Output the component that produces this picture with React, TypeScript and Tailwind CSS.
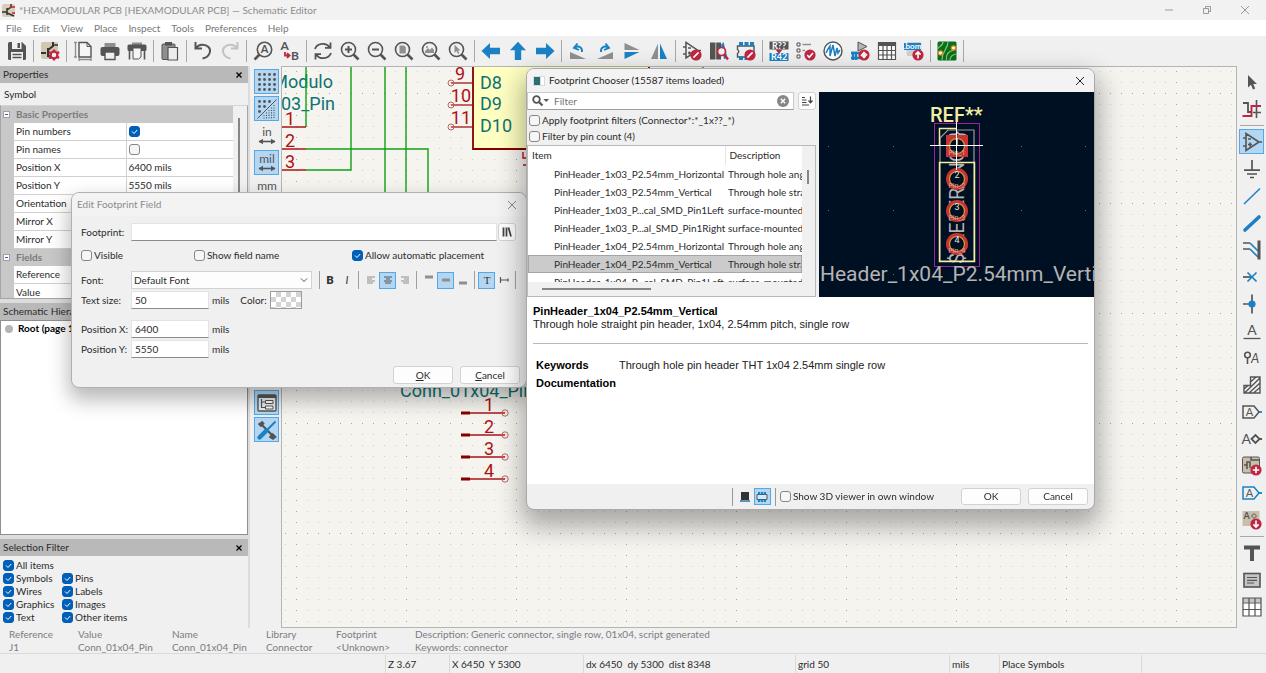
import * as React from "react";
import clsx from "clsx";

const G = "#545454";
const L = "#8f8f8f";
const B = "#1a81c4";
const R = "#bf2641";

function Badge({ x = 14, y = 14, d }: { x?: number; y?: number; d: string }) {
  return (
    <g transform={`translate(${x} ${y})`}>
      <circle r="5.6" fill={R} />
      <path d={d} stroke="#fff" strokeWidth="1.6" fill="none" />
    </g>
  );
}

function Lens({ children }: { children?: React.ReactNode }) {
  return (
    <g>
      <circle cx="8.5" cy="8.5" r="7" stroke={G} strokeWidth="1.6" fill="none" />
      <path d="M13.5 13.5L18.5 18.5" stroke={G} strokeWidth="2.6" />
      {children}
    </g>
  );
}

const SLASH = "M-2.6 2.6L2.6 -2.6";
const CHECK = "M-2.8 0L-0.8 2.2L3 -2";
const UP = "M0 3.6V-3M-2.6 -0.4L0 -3L2.6 -0.4";
const DOWN = "M0 -3.6V3M-2.6 0.4L0 3L2.6 0.4";
const PLUS = "M-3.2 0H3.2M0 -3.2V3.2";

const icons: Record<string, React.ReactNode> = {
  save: (
    <g>
      <path d="M1 2.5Q1 1 2.5 1H15L19 5V17.5Q19 19 17.5 19H2.5Q1 19 1 17.5Z" fill={G} />
      <path d="M5 1H14.5V8H5Z" fill="#f0f0f0" />
      <path d="M10.5 2H13V7H10.5Z" fill={G} />
      <path d="M4 11H16V19H4Z" fill="#f0f0f0" />
      <path d="M5.5 13.5H14.5M5.5 16.5H14.5" stroke={G} strokeWidth="1.4" />
    </g>
  ),
  setup: (
    <g>
      <rect x="1" y="1" width="17" height="17" rx="2" fill="#d1c6b0" />
      <path d="M1 12H6M8 7V16M8 9L13 5V1M8 14L11 17" stroke="#333" strokeWidth="2" fill="none" />
      <path d="M13 4H18" stroke="#333" strokeWidth="1.5" />
      <circle cx="14" cy="14" r="3.4" stroke={R} strokeWidth="2.2" fill="#f0f0f0" />
      <path d="M14 8.4V10M14 18V19.6M8.9 11L10.4 12M17.6 16L19.1 17M8.9 17L10.4 16M17.6 12L19.1 11" stroke={R} strokeWidth="2.2" />
    </g>
  ),
  page: (
    <g>
      <path d="M6 1.5H14L18 5.5V16H6Z" fill="#f6f6f6" stroke={G} strokeWidth="1.4" />
      <path d="M14 1.5V5.5H18" fill="none" stroke={G} />
      <path d="M2.5 1V16M1 1.5H4M1 16H4M6 18.5H18M6.2 17V20M18 17V20" stroke={L} strokeWidth="1.3" />
    </g>
  ),
  print: (
    <g>
      <path d="M4.5 2H15.5V6H4.5Z" fill={L} />
      <rect x="0.5" y="6" width="19" height="9" rx="2" fill={G} />
      <path d="M5 11H15V18.5H5Z" fill="#f0f0f0" stroke={G} strokeWidth="1.4" />
    </g>
  ),
  plot: (
    <g>
      <path d="M5 1.5H15V4H5Z" fill={L} />
      <rect x="0.5" y="3.5" width="19" height="6.5" rx="1.5" fill={G} />
      <path d="M2.5 9V18.5M17.5 9V18.5" stroke={G} strokeWidth="1.6" />
      <path d="M6 7H14V16L11.5 18H6Z" fill="#f5f5f5" stroke={G} strokeWidth="1" />
    </g>
  ),
  paste: (
    <g>
      <rect x="2" y="3" width="13" height="15.5" rx="1" fill={L} stroke={G} />
      <rect x="5" y="1" width="7" height="3.6" fill={G} />
      <path d="M8 6.5H17.5V19H8Z" fill="#ececec" stroke={G} strokeWidth="1.2" />
    </g>
  ),
  undo: <path d="M2.5 1V7.5H9M3 7C6 3 12 2.5 15.5 6C19 10 16 16.5 9.5 17.5" stroke={G} strokeWidth="2" fill="none" />,
  redo: <path d="M17.5 1V7.5H11M17 7C14 3 8 2.5 4.5 6C1 10 4 16.5 10.5 17.5" stroke="#c2c2c2" strokeWidth="2" fill="none" />,
  find: (
    <g>
      <circle cx="11.5" cy="8.5" r="7.2" stroke={G} strokeWidth="1.6" fill="none" />
      <path d="M6.5 13.5L1.5 18.5" stroke={G} strokeWidth="2.6" />
      <text x="11.5" y="12.4" textAnchor="middle" fontSize="11" fontWeight="700" fill={G}>A</text>
    </g>
  ),
  replace: (
    <g fontWeight="700" fontSize="12" fill={G}>
      <text x="0.5" y="9">A</text>
      <text x="11" y="19">B</text>
      <path d="M5 11V14.5H9M7 12.2L9.6 14.5L7 16.8" stroke={R} strokeWidth="1.8" fill="none" />
    </g>
  ),
  refresh: (
    <path d="M2 8C4 2 13 1 16.5 6M17.5 1.5V6.8H12M18 12C16 18 7 19 3.5 14M2.5 18.5V13.2H8" stroke={G} strokeWidth="1.8" fill="none" />
  ),
  zoomIn: <Lens><path d="M5 8.5H12M8.5 5V12" stroke={G} strokeWidth="2" /></Lens>,
  zoomOut: <Lens><path d="M5 8.5H12" stroke={G} strokeWidth="2" /></Lens>,
  zoomFit: <Lens><path d="M5.5 4.5H10L11.8 6.3V12.5H5.5Z" fill={L} /></Lens>,
  zoomObj: <Lens><path d="M4 12V10L7 7L9 9L11 6.5L13 9V12Z" fill={L} /><circle cx="6" cy="6" r="1" fill={L} /></Lens>,
  zoomSel: <Lens><path d="M6.5 3.5V12L8.5 10L10 13L11.3 12.3L10 9.5H12.5Z" fill={L} /></Lens>,
  left: <path d="M0.5 10L9 2V6.8H19V13.2H9V18Z" fill={B} />,
  up: <path d="M10 0.8L18 9.2H13.2V19H6.8V9.2H2Z" fill={B} />,
  right: <path d="M19.5 10L11 2V6.8H1V13.2H11V18Z" fill={B} />,
  rotL: (
    <g>
      <path d="M2 11V18H18Z" fill={L} />
      <path d="M7 6.5C11 4 14.5 7 14 11M9.5 2.5L6 6.8L11 9" stroke={B} strokeWidth="1.9" fill="none" />
    </g>
  ),
  rotR: (
    <g>
      <path d="M18 11V18H2Z" fill={L} />
      <path d="M13 6.5C9 4 5.5 7 6 11M10.5 2.5L14 6.8L9 9" stroke={B} strokeWidth="1.9" fill="none" />
    </g>
  ),
  mirV: (
    <g>
      <path d="M2.5 2V9H17.5Z" fill={L} />
      <path d="M2.5 18V11H17.5Z" fill={B} />
    </g>
  ),
  mirH: (
    <g>
      <path d="M2 18H9V2.5Z" fill={L} />
      <path d="M18 18H11V2.5Z" fill={B} />
    </g>
  ),
  symEdit: (
    <g>
      <path d="M4 1.5V17L16 9.5Z M1 6H4M1 13H4M16 9.5H19M6 7H9M6 12H9M7.5 10.5V13.5" stroke={G} strokeWidth="1.5" fill="none" />
      <Badge d={SLASH} />
    </g>
  ),
  browse: (
    <g>
      <path d="M1 1.5H6.5V18.5H1Z M7.2 1.5H12V18.5H7.2Z" fill={G} />
      <path d="M12 4L14.5 1L18.5 17L15 18Z" fill={B} />
      <circle cx="12.5" cy="10.5" r="4" stroke={R} strokeWidth="1.7" fill="#f0f0f0" />
      <path d="M15.3 13.6L19 18.5" stroke={R} strokeWidth="2.4" />
    </g>
  ),
  fpEdit: (
    <g>
      <path d="M1.5 5H18V16H1.5V12.5Q4 10.5 1.5 8.5Z" stroke={G} strokeWidth="1.4" fill="none" />
      <path d="M3 1H7V5H3Z M8.5 1H12.5V5H8.5Z M14 1H18V5H14Z M3 15.5H7V19H3Z M8.5 15.5H12.5V19H8.5Z" fill={B} />
      <Badge d={SLASH} />
    </g>
  ),
  annotate: (
    <g fontWeight="700" fontSize="9" fill="#fff" textAnchor="middle">
      <rect x="0.5" y="0.5" width="19" height="8" fill={G} />
      <text x="10" y="7.6">R??</text>
      <rect x="0.5" y="12" width="19" height="8" fill={B} />
      <text x="10" y="19.2">R42</text>
      <path d="M6.5 8.5H13.5L10 13Z" fill={R} />
    </g>
  ),
  erc: (
    <g>
      <path d="M1 2H4V5H1Z M1 8H4V11H1Z M1 14H4V17H1Z" fill="none" stroke={G} />
      <path d="M6.5 3.5H15M6.5 9.5H9" stroke={L} strokeWidth="1.4" />
      <Badge d={CHECK} />
    </g>
  ),
  sim: (
    <g>
      <circle cx="10" cy="10" r="9" fill="#fff" stroke={G} strokeWidth="1.4" />
      <path d="M3 12L5 8L7 5V15L10 4L12 15L14 7L15 12L17 9" stroke={B} strokeWidth="1.5" fill="none" />
    </g>
  ),
  assign: (
    <g>
      <path d="M8 1V10L17 5.5Z" fill="#b5b5b5" stroke={G} />
      <path d="M1 12H9M1 17H10M3 10.5V19M6 10.5V19" stroke={B} strokeWidth="2.4" />
      <Badge d="M-3 1L0 -2.5L1.5 -1M3 -1L0 2.5L-1.5 1M-1 1L1 -1" />
    </g>
  ),
  table: (
    <g>
      <rect x="1.2" y="1.2" width="17.6" height="17.6" fill="#fff" />
      <path d="M1 1H19V5H1Z" fill={G} />
      <path d="M1.5 1V18.5H18.5V1M1 9.5H19M1 14H19M6 5V19M10 5V19M14.5 5V19" stroke={G} strokeWidth="1.2" fill="none" />
    </g>
  ),
  bom: (
    <g>
      <rect x="2.5" y="1" width="15" height="14" rx="2" fill="#cfcfcf" />
      <rect x="0" y="2" width="17" height="7" fill={B} />
      <text x="8.5" y="8" fontSize="8" fontWeight="700" fill="#fff" textAnchor="middle">.bom</text>
      <Badge d={UP} />
    </g>
  ),
  pcb: (
    <g>
      <rect x="0.5" y="0.5" width="19" height="19" rx="1.5" fill="#0d6f19" />
      <path d="M6 0.5C6 6 1 5 0.8 8M11 0.5C11 9 5 9 5 19M17 9C10 11 9 14 9.5 19M19 13C14 14 13 16 13 19" stroke="#7cc77f" strokeWidth="1.2" fill="none" />
      <circle cx="16.5" cy="7" r="2.1" fill="#fff" stroke="#e88b1e" strokeWidth="1.3" />
      <circle cx="3.5" cy="12" r="2.1" fill="#fff" stroke="#e88b1e" strokeWidth="1.3" />
    </g>
  ),
  grid: (
    <g fill={G}>
      {[2, 7, 12, 17].map((y) => [2, 7, 12, 17].map((x) => <circle key={x + "-" + y} cx={x + 0.5} cy={y + 0.5} r="1.4" />))}
    </g>
  ),
  gridOverride: (
    <g fill={G}>
      {[[2, 2], [7, 2], [12, 2], [2, 7], [7, 7], [2, 12]].map(([x, y]) => <circle key={x + "-" + y} cx={x + 0.5} cy={y + 0.5} r="1.4" />)}
      <path d="M0.5 19.5L19.5 0.5" stroke={G} strokeWidth="1" />
      <path d="M17 6V20M14.5 8.5V20M12 11V20M9.5 13.5V20M7 16V20" stroke={G} strokeWidth="1.1" strokeDasharray="1.1 1.3" />
    </g>
  ),
  inch: <Unit name="in" />,
  mil: <Unit name="mil" />,
  mm: <Unit name="mm" />,
  cross: <path d="M10 1V19M1 10H19" stroke={G} strokeWidth="1.4" />,
  line90: <path d="M2 2V18H18" stroke={B} strokeWidth="1.8" fill="none" />,
  tree: (
    <g>
      <rect x="1" y="2" width="18" height="16" rx="1" fill="#e9eef2" stroke={G} strokeWidth="1.4" />
      <path d="M1 2H19V5H1Z" fill={G} />
      <path d="M4.5 6V14.5H8M4.5 9H8" stroke={G} strokeWidth="1.2" fill="none" />
      <path d="M8.5 7.5H16V10.5H8.5Z M8.5 13H16V16H8.5Z" fill="#fff" stroke={G} />
    </g>
  ),
  tools: (
    <g>
      <path d="M4 4L16.5 16.5" stroke={G} strokeWidth="2.2" />
      <path d="M1.5 3.5L4 6L6.5 3.5L4.5 1.5M13 17L15.5 14L18.5 17L16 19Z" stroke={G} strokeWidth="1.8" fill={G} />
      <path d="M18.5 1.5L9.5 10.5" stroke={B} strokeWidth="2" />
      <path d="M9.5 10.5L2.5 17.5" stroke={B} strokeWidth="4.4" strokeLinecap="round" />
    </g>
  ),
  cursor: <path d="M6 3V15.5L9 12.8L11 17.5L13.2 16.5L11.2 12H15Z" fill={G} />,
  highlight: (
    <g fill="none">
      <path d="M1 4H6V13H9" stroke={G} strokeWidth="1.8" />
      <path d="M14.5 1V19M11 13.5H19" stroke={G} strokeWidth="1.6" />
      <path d="M0.5 17H9.5V7H19" stroke={R} strokeWidth="1.9" />
    </g>
  ),
  symbol: <path d="M4 1.5V18.5L17 10Z M1 6H4M1 14H4M17 10H20M6 7H9M6 12.5H10M8 10.5V14.5" stroke={G} strokeWidth="1.6" fill="none" />,
  power: <path d="M10 1V11M2 11.2H18M5 15H15M8 18.5H12" stroke={G} strokeWidth="1.7" fill="none" />,
  wire: <path d="M2 18L18 2.5" stroke={B} strokeWidth="1.5" />,
  bus: <path d="M3 17L17 4" stroke={B} strokeWidth="3.6" strokeLinecap="round" />,
  busEntry: (
    <g fill="none">
      <path d="M1 3H8M1 9H8" stroke={G} strokeWidth="1.5" />
      <path d="M8 3L16 11M8 9L16 17" stroke={B} strokeWidth="1.7" />
      <path d="M17 0.5V19.5" stroke={G} strokeWidth="3" />
    </g>
  ),
  noConnect: (
    <g>
      <path d="M1 10H9" stroke={G} strokeWidth="1.7" />
      <path d="M5.5 5.5L14.5 14.5M14.5 5.5L5.5 14.5" stroke={B} strokeWidth="1.7" />
    </g>
  ),
  junction: (
    <g>
      <path d="M10 0.5V19.5M1 10H10" stroke={G} strokeWidth="1.7" />
      <circle cx="10" cy="10" r="3.6" fill={B} />
    </g>
  ),
  label: (
    <g>
      <text x="10" y="14" fontSize="14" textAnchor="middle" fill={G}>A</text>
      <path d="M1.5 17.5H18.5" stroke={G} strokeWidth="1.3" />
    </g>
  ),
  directive: (
    <g>
      <circle cx="5.5" cy="7" r="2.8" stroke={G} strokeWidth="1.6" fill="none" />
      <path d="M5.5 10V16" stroke={G} strokeWidth="1.6" />
      <text x="9" y="14.5" fontSize="13" fontStyle="italic" fill={G}>A</text>
    </g>
  ),
  ruleArea: (
    <path d="M8.5 2H18V18H2V10.5H8.5ZM2 14L6 10.5M2.5 18L18 3M7 18L18 8M11.5 18L18 12.5M8.5 7L14 2" stroke={G} strokeWidth="1.4" fill="none" />
  ),
  globalLabel: <FlagLabel color={G} />,
  hierLabel: (
    <g>
      <text x="-0.5" y="14.5" fontSize="14" fill={G}>A</text>
      <path d="M9.5 10L13.5 6L17.5 10L13.5 14ZM17.5 10H20" stroke={G} strokeWidth="1.8" fill="none" />
    </g>
  ),
  sheet: (
    <g>
      <rect x="0.5" y="1" width="17" height="16" rx="1.5" fill="#c9bfa9" stroke={G} />
      <path d="M9 1V4H17.5M2 9H5V6H8V12M5 9V13" stroke={G} strokeWidth="1.5" fill="none" />
      <Badge x={14} y={14} d={PLUS} />
    </g>
  ),
  sheetPin: <FlagLabel color={B} />,
  importPin: (
    <g>
      <rect x="0.5" y="1" width="17" height="15" fill="#c9bfa9" />
      <text x="1.5" y="9" fontSize="9" fontWeight="700" fill={G}>A</text>
      <path d="M9.5 6L12 3.5L14.5 6L12 8.5Z" stroke={G} fill="none" />
      <Badge d={DOWN} />
    </g>
  ),
  text: <path d="M2 2.5H18V6.5H12V18H8V6.5H2Z" fill={G} />,
  textBox: (
    <g>
      <rect x="2" y="3.5" width="16" height="13.5" fill="#c4c4c4" stroke={G} strokeWidth="1.6" />
      <path d="M5 7.5H15M5 10.3H15M5 13H12" stroke={G} strokeWidth="1.2" />
    </g>
  ),
  drawTable: (
    <g>
      <rect x="1" y="1" width="18" height="18" fill="#fff" />
      <path d="M1 1H19V5.5H1Z" fill="#c4c4c4" />
      <path d="M1 1H19V19H1ZM1 6H19M1 12.5H19M7 1V19M13 1V19" stroke={G} strokeWidth="1.2" fill="none" />
    </g>
  ),
};

function Unit({ name }: { name: string }) {
  return (
    <g>
      <text x="10" y="10" fontSize="12" textAnchor="middle" fill={G}>{name}</text>
      <path d="M2 15.5H18" stroke={G} strokeWidth="1.6" />
      <path d="M1.5 15.5L6 12.8V18.2ZM18.5 15.5L14 12.8V18.2Z" fill={G} />
    </g>
  );
}

function FlagLabel({ color }: { color: string }) {
  return (
    <g>
      <path d="M1 4H12L17 10L12 16H1Z" stroke={color} strokeWidth="1.5" fill="none" />
      <path d="M17 10H20" stroke={B} strokeWidth="1.8" />
      <text x="7.5" y="14" fontSize="11" textAnchor="middle" fill={G}>A</text>
    </g>
  );
}

function Icon({ name }: { name: string }) {
  return (
    <svg viewBox="0 0 20 20" className="w-5 h-5 shrink-0 overflow-visible" aria-hidden="true">
      {icons[name]}
    </svg>
  );
}

type BarProps = { items: string[]; active?: string[]; vertical?: boolean };

function ToolBar({ items, active = [], vertical }: BarProps) {
  return (
    <div className={clsx("flex items-center", vertical && "flex-col")} role="toolbar">
      {items.map((name, i) =>
        name === "|" ? (
          <span key={i} className={clsx("flex shrink-0 items-center justify-center", vertical ? "h-1.5 w-6" : "w-1.5 h-6")}>
            <span className={clsx("bg-[#a8a8a8]", vertical ? "h-px w-full" : "w-px h-[22px]")} />
          </span>
        ) : (
          <button
            key={i}
            aria-label={name}
            className={clsx(
              "m-px flex w-[25px] h-[25px] shrink-0 items-center justify-center border",
              active.includes(name) ? "bg-[#b3d7f3] border-[#56a7e2]" : "border-transparent"
            )}
          >
            <Icon name={name} />
          </button>
        )
      )}
    </div>
  );
}

function Check({ label, checked = false }: { label?: string; checked?: boolean }) {
  return (
    <label className="flex items-center gap-0.5 whitespace-nowrap">
      <span className="relative flex">
        <input
          type="checkbox"
          defaultChecked={checked}
          aria-label={label ? undefined : "toggle"}
          className="peer appearance-none w-[11px] h-[11px] rounded-[3px] border border-[#868686] bg-[#f6f6f6] checked:bg-[#005fb8] checked:border-[#005fb8]"
        />
        <svg viewBox="0 0 11 11" className="absolute inset-0 hidden peer-checked:block pointer-events-none">
          <path d="M3 5.5L5 7.5L8.2 4" stroke="#fff" fill="none" />
        </svg>
      </span>
      {label}
    </label>
  );
}

function PaneTitle({ title, closable = true }: { title: string; closable?: boolean }) {
  return (
    <div className="flex h-[17px] shrink-0 items-center justify-between bg-[#b9b9b9] pl-[3px] pr-1.5">
      <span className="whitespace-nowrap">{title}</span>
      {closable && (
        <button aria-label={"Close " + title}>
          <svg viewBox="0 0 6 6" className="w-1.5 h-1.5"><path d="M0.5 0.5L5.5 5.5M5.5 0.5L0.5 5.5" stroke="#000" strokeWidth="1.3" /></svg>
        </button>
      )}
    </div>
  );
}

type Prop = { name: string; value?: React.ReactNode; group?: boolean };

const properties: Prop[] = [
  { name: "Basic Properties", group: true },
  { name: "Pin numbers", value: <Check checked /> },
  { name: "Pin names", value: <Check /> },
  { name: "Position X", value: "6400 mils" },
  { name: "Position Y", value: "5550 mils" },
  { name: "Orientation", value: "" },
  { name: "Mirror X", value: "" },
  { name: "Mirror Y", value: "" },
  { name: "Fields", group: true },
  { name: "Reference", value: "" },
  { name: "Value", value: "" },
];

function Properties() {
  return (
    <section className="flex h-[233px] shrink-0 flex-col">
      <PaneTitle title="Properties" />
      <div className="flex h-[22px] shrink-0 items-center pl-1">Symbol</div>
      <div className="flex min-h-0 flex-1 overflow-hidden border border-[#a5a5a5] border-t-[#d5d5d5]">
        <table className="h-[196px] flex-1 border-collapse bg-white">
          <tbody>
            {properties.map((p) =>
              p.group ? (
                <tr key={p.name} className="bg-[#c8c8c8] font-bold text-[#7b7b7b]">
                  <td className="w-[13px] p-0 pl-0.5">
                    <span className="flex w-[7px] h-[7px] items-center justify-center border border-[#a0a0a0] bg-white">
                      <span className="w-[3px] h-px bg-[#3b5fb5]" />
                    </span>
                  </td>
                  <td colSpan={2} className="p-0 pl-0.5">{p.name}</td>
                </tr>
              ) : (
                <tr key={p.name}>
                  <td className="w-[13px] bg-[#c8c8c8] p-0" />
                  <td className="w-[112px] border-b border-r border-[#d0d0d0] p-0 pl-0.5">{p.name}</td>
                  <td className="border-b border-[#d0d0d0] p-0 pl-0.5">{p.value}</td>
                </tr>
              )
            )}
          </tbody>
        </table>
        <div className="w-[14px] bg-[#f0f0f0] pl-[5px] pt-3">
          <div className="w-0.5 h-full bg-[#868686]" />
        </div>
      </div>
    </section>
  );
}

const filters = [
  ["All items", ""],
  ["Symbols", "Pins"],
  ["Wires", "Labels"],
  ["Graphics", "Images"],
  ["Text", "Other items"],
];

function SidePanel() {
  return (
    <aside className="flex w-[248px] shrink-0 flex-col gap-1 bg-[#dcdcdc]">
      <div className="bg-[#f0f0f0]"><Properties /></div>
      <section className="flex min-h-0 flex-1 flex-col">
        <PaneTitle title="Schematic Hierarchy" closable={false} />
        <div className="flex-1 border border-[#8f8f8f] bg-white pl-1 pt-px">
          <div className="flex items-center gap-[5px] font-bold text-black">
            <span className="w-2 h-2 rounded-full bg-[#b5b5b5]" />
            Root (page 1)
          </div>
        </div>
      </section>
      <section className="bg-[#f0f0f0]">
        <PaneTitle title="Selection Filter" />
        <div className="grid grid-cols-[59px_1fr] pl-[3px] pt-[3px] pb-1">
          {filters.map(([a, b]) => (
            <React.Fragment key={a}>
              <div className="h-[13px] flex items-center"><Check label={a} checked /></div>
              <div className="h-[13px] flex items-center">{b && <Check label={b} checked />}</div>
            </React.Fragment>
          ))}
        </div>
      </section>
    </aside>
  );
}

const leftPins = [[17, "9", 184], [39, "10", 190], [61, "11", 190]] as const;

function Canvas() {
  return (
    <div className="min-w-0 flex-1 border-l border-t border-b border-[#b4b4b4] bg-[#f5f4ef]">
      <svg className="block h-full w-full" fontFamily="Roboto, sans-serif" fontSize="18">
        <defs>
          <pattern id="dots" x="3" y="4" width="11" height="11" patternUnits="userSpaceOnUse">
            <rect width="1" height="1" fill="#d0cfca" />
          </pattern>
          <pattern id="dotsCol" x="14" y="4" width="110" height="11" patternUnits="userSpaceOnUse">
            <rect width="1" height="1" fill="#a4a4a4" />
          </pattern>
          <pattern id="dotsRow" x="3" y="26" width="11" height="110" patternUnits="userSpaceOnUse">
            <rect width="1" height="1" fill="#a4a4a4" />
          </pattern>
        </defs>
        <rect width="100%" height="100%" fill="url(#dots)" />
        <rect width="100%" height="100%" fill="url(#dotsCol)" />
        <rect width="100%" height="100%" fill="url(#dotsRow)" />
        <g transform="translate(-1 -1)">
          <g fill="#0f7373">
            <text x="52" y="22" textAnchor="end">Modulo</text>
            <text x="54" y="44" textAnchor="end">03_Pin</text>
            <text x="119" y="331">Conn_01x04_Pin</text>
          </g>
          <path d="M25 0V61M70 0V104H25M104 0V130M125 0V130M25 83H147V130M422 0V2" stroke="#12a012" strokeWidth="1.4" fill="none" />
          <path d="M0 61H25M0 83H25M0 104H25" stroke="#a8161a" strokeWidth="1.4" />
          <g fill="#b01015">
            <text x="4" y="59">1</text>
            <text x="4" y="81">2</text>
            <text x="4" y="102">3</text>
          </g>
          <path d="M192 -10V83H368V-10Z" fill="#ffffc2" stroke="#840000" strokeWidth="1.8" />
          {leftPins.map(([y, n, x]) => (
            <g key={n}>
              <path d={`M170 ${y}H191`} stroke="#a8161a" strokeWidth="1.3" />
              <circle cx="170" cy={y} r="3" stroke="#c06060" fill="none" />
              <text x={x} y={y - 3} textAnchor="end" fill="#b01015">{n}</text>
            </g>
          ))}
          <g fill="#0f7373">
            <text x="199" y="23">D8</text>
            <text x="199" y="44">D9</text>
            <text x="199" y="66">D10</text>
          </g>
          <path d="M242 86V92H246M242 99H246" stroke="#b01015" strokeWidth="1.4" fill="none" />
          {[347, 369, 391, 413].map((y, i) => (
            <g key={y}>
              <path d={`M180 ${y}H189`} stroke="#840000" strokeWidth="3" />
              <path d={`M189 ${y}H224`} stroke="#a8161a" strokeWidth="1.3" />
              <circle cx="224" cy={y} r="3.2" stroke="#c06060" fill="none" />
              <text x="208" y={y - 2} textAnchor="middle" fill="#b01015">{i + 1}</text>
            </g>
          ))}
        </g>
      </svg>
    </div>
  );
}

function Preview() {
  return (
    <div className="h-[205px] min-w-0 flex-1 bg-[#001023]">
      <svg className="block h-full w-full" fontFamily="Roboto, sans-serif">
        {[54, 118, 182].map((y) => [9, 74, 202, 266].map((x) => <rect key={x + "-" + y} x={x} y={y} width="1" height="1" fill="#66707c" />))}
        <text x="111" y="30" fontSize="20" fill="#f2eda1" fontWeight="500">REF**</text>
        <rect x="115.5" y="31.5" width="45" height="143" stroke="#a01fa0" fill="none" />
        <path d="M121 46L129 38H155V169H121Z" stroke="#9a9a9a" fill="none" strokeWidth="1.2" />
        <text transform="translate(145 172) rotate(-90)" fontSize="20" fill="#b4b4b4">{"${REFERENCE}"}</text>
        <path d="M120.5 54V36.5H138M120.5 70.5H155.5V169.5H120.5Z" stroke="#f2eda1" strokeWidth="1.5" fill="none" />
        <rect x="127" y="43" width="22" height="22" fill="#c83434" />
        {[54, 87, 119, 152].map((y, i) => (
          <g key={y} textAnchor="middle">
            <circle cx="138" cy={y} r="11" fill="#c83434" />
            <circle cx="138" cy={y} r="7.5" fill="#001023" stroke="#d0a030" strokeWidth="1.2" />
            <text x="138" y={y - 1} fontSize="9" fill="#e3e3e3">{i + 1}</text>
            <text x="138" y={y + 9} fontSize="7" fill="#e0a0a0">Pin_{i + 1}</text>
          </g>
        ))}
        <path d="M111 53.5H164M137.5 30V78" stroke="#fff" strokeWidth="1" />
        <text x="1" y="189" fontSize="21" fill="#b4b4b4">Header_1x04_P2.54mm_Vertical</text>
      </svg>
    </div>
  );
}

const footprints = [
  ["PinHeader_1x03_P2.54mm_Horizontal", "Through hole angled pin header"],
  ["PinHeader_1x03_P2.54mm_Vertical", "Through hole straight pin header"],
  ["PinHeader_1x03_P...cal_SMD_Pin1Left", "surface-mounted straight pin header"],
  ["PinHeader_1x03_P...al_SMD_Pin1Right", "surface-mounted straight pin header"],
  ["PinHeader_1x04_P2.54mm_Horizontal", "Through hole angled pin header"],
  ["PinHeader_1x04_P2.54mm_Vertical", "Through hole straight pin header"],
  ["PinHeader_1x04_P...cal_SMD_Pin1Left", "surface-mounted straight pin header"],
];

function FootprintTable() {
  const [selected, setSelected] = React.useState(5);

  return (
    <div className="flex h-[152px] border border-[#b9b9b9] bg-[#f0f0f0]">
      <div className="flex min-w-0 flex-1 flex-col">
        <div className="h-[136px] overflow-hidden">
          <table className="w-full table-fixed border-collapse bg-white">
            <thead>
              <tr className="h-[19px]">
                <th className="w-[197px] border-r border-[#e5e5e5] p-0 pl-1 text-left font-normal">Item</th>
                <th className="p-0 pl-1 text-left font-normal">Description</th>
              </tr>
            </thead>
            <tbody>
              {footprints.map(([name, description], i) => (
                <tr key={i} onClick={() => setSelected(i)} className={clsx("h-[18px]", selected === i && "bg-[#cbcbcb] outline outline-[#a5a5a5] -outline-offset-1")}>
                  <td className="whitespace-nowrap p-0 pl-[26px]">{name}</td>
                  <td className="overflow-hidden whitespace-nowrap p-0 pl-[3px]">{description}</td>
                </tr>
              ))}
            </tbody>
          </table>
        </div>
        <div className="flex flex-1 items-center pl-3.5">
          <div className="w-[109px] h-0.5 bg-[#868686]" />
        </div>
      </div>
      <div className="w-[13px] pl-[5px] pt-6">
        <div className="w-0.5 h-3.5 bg-[#868686]" />
      </div>
    </div>
  );
}

function FootprintChooser() {
  return (
    <div role="dialog" className="absolute left-[526px] top-[68px] flex w-[569px] flex-col overflow-hidden rounded-lg border border-[#a9a9a9] bg-[#f0f0f0] shadow-[0_12px_26px_4px_rgba(0,0,0,0.32)]">
      <div className="flex h-[23px] items-center bg-[#f3f3f3] pl-1.5 pr-2.5">
        <svg viewBox="0 0 12 10" className="w-3 h-2.5">
          <rect width="12" height="10" fill="#d5dde0" />
          <rect x="1" y="1" width="6" height="8" fill="#2f6f73" />
          <rect x="8" y="1" width="3" height="8" fill="#fff" />
        </svg>
        <span className="flex-1 pl-1 text-[#1f1f1f]">Footprint Chooser (15587 items loaded)</span>
        <button aria-label="Close chooser">
          <svg viewBox="0 0 8 8" className="w-2 h-2"><path d="M0 0L8 8M8 0L0 8" stroke="#222" /></svg>
        </button>
      </div>
      <div className="flex">
        <div className="w-[292px] shrink-0 pr-[3px]">
          <div className="flex h-[18px] items-stretch">
            <div className="flex flex-1 items-center border border-[#c9c9c9] border-b-[#9d9d9d] bg-white pl-1 pr-1">
              <svg viewBox="0 0 18 12" className="w-[18px] h-3">
                <circle cx="4.5" cy="4.5" r="3.3" stroke="#555" strokeWidth="1.8" fill="none" />
                <path d="M7 7L10.5 10.5" stroke="#555" strokeWidth="2.2" />
                <path d="M11.5 4H17L14.2 7Z" fill="#555" />
              </svg>
              <input autoFocus aria-label="Filter" placeholder="Filter" className="min-w-0 flex-1 bg-transparent pl-1 outline-none placeholder:text-[#777] caret-black" />
              <button aria-label="Clear filter">
                <svg viewBox="0 0 12 12" className="w-3 h-3">
                  <circle cx="6" cy="6" r="6" fill="#868686" />
                  <path d="M3.8 3.8L8.2 8.2M8.2 3.8L3.8 8.2" stroke="#fff" strokeWidth="1.4" />
                </svg>
              </button>
            </div>
            <button aria-label="Sort" className="ml-1 flex w-[18px] items-center justify-center rounded-[3px] border border-[#d2d2d2] bg-[#fdfdfd]">
              <svg viewBox="0 0 11 10" className="w-[11px] h-2.5">
                <path d="M0 1.5H3M0 4H4.5M0 6.5H4.5M0 9H7M8.5 0.5V6.5M6.5 4.5L8.5 6.8L10.5 4.5" stroke="#444" strokeWidth="1.2" fill="none" />
              </svg>
            </button>
          </div>
          <div className="flex flex-col gap-0.5 pt-[3px] pl-0.5 pb-0.5 leading-[14px]">
            <Check label="Apply footprint filters (Connector*:*_1x??_*)" />
            <Check label="Filter by pin count (4)" />
          </div>
          <FootprintTable />
        </div>
        <Preview />
      </div>
      <div className="flex h-[187px] flex-col bg-white px-1.5 pt-2 font-['Liberation_Sans',Arial,sans-serif] text-[11px] leading-[13px] text-[#222]">
        <b className="text-black">PinHeader_1x04_P2.54mm_Vertical</b>
        <span>Through hole straight pin header, 1x04, 2.54mm pitch, single row</span>
        <hr className="mt-3 border-[#b9b9b9]" />
        <dl className="mt-3 grid grid-cols-[83px_1fr] pl-[3px] leading-[18px]">
          <dt className="font-bold text-black">Keywords</dt>
          <dd>Through hole pin header THT 1x04 2.54mm single row</dd>
          <dt className="font-bold text-black">Documentation</dt>
          <dd />
        </dl>
      </div>
      <div className="flex h-[25px] items-center justify-end pr-1.5">
        <span className="mr-1 h-[18px] w-px bg-[#999]" />
        <button aria-label="3D view" className="flex w-[17px] h-[17px] items-center justify-center">
          <svg viewBox="0 0 12 12" className="w-3 h-3"><path d="M2 1H10V9H2Z" fill="#333" /><path d="M1 10H11" stroke={B} strokeWidth="1.6" /><path d="M3 9.5H9" stroke={L} /></svg>
        </button>
        <button aria-label="Footprint view" className="flex w-[17px] h-[17px] items-center justify-center border border-[#56a7e2] bg-[#b3d7f3]">
          <svg viewBox="0 0 12 12" className="w-3 h-3 shrink-0"><path d="M1 3.5H11V8.5H1Z" fill="#d6e9f8" stroke={G} /><path d="M2 2.2H10M2 9.8H10" stroke={B} strokeWidth="2.6" strokeDasharray="2.2 0.7" /></svg>
        </button>
        <span className="mx-1 h-[18px] w-px bg-[#999]" />
        <Check label="Show 3D viewer in own window" />
        <button className="ml-[27px] h-[17px] w-[60px] rounded-[3px] border border-[#d2d2d2] bg-[#fdfdfd]">OK</button>
        <button className="ml-[7px] h-[17px] w-[60px] rounded-[3px] border border-[#d2d2d2] bg-[#fdfdfd]">Cancel</button>
      </div>
    </div>
  );
}

const fieldClass = "h-[18px] border border-[#e3e3e3] border-b-[#8a8a8a] bg-white px-[3px] outline-none";

function Measure({ id, label, value }: { id: string; label: string; value: string }) {
  return (
    <div className="flex h-[18px] items-center">
      <label htmlFor={id} className="w-[50px] whitespace-nowrap">{label}</label>
      <input id={id} defaultValue={value} className={clsx(fieldClass, "w-[78px]")} />
      <span className="pl-[3px]">mils</span>
    </div>
  );
}

const formatGlyphs: Record<string, React.ReactNode> = {
  bold: <text x="6" y="10" fontSize="11" fontWeight="800" textAnchor="middle" fill="#333">B</text>,
  italic: <text x="6" y="10" fontSize="11" fontStyle="italic" textAnchor="middle" fill="#333">I</text>,
  alignLeft: <path d="M2 3H10M2 5H7M2 7H10M2 9H8" stroke={L} />,
  alignCenter: <path d="M2 3H10M4 5H8M2 7H10M3 9H9" stroke={G} />,
  alignRight: <path d="M2 3H10M5 5H10M2 7H10M4 9H10" stroke={L} />,
  top: <path d="M2 3H10" stroke={L} strokeWidth="3" />,
  middle: <path d="M2 6H10" stroke={L} strokeWidth="3" />,
  bottom: <path d="M2 9H10" stroke={L} strokeWidth="3" />,
  horizontal: <text x="6" y="10" fontSize="11" fontFamily="Liberation Serif, serif" textAnchor="middle" fill="#333">T</text>,
  vertical: <path d="M2.5 3V9M2.5 6H10M10 4.5V7.5" stroke={G} strokeWidth="1.2" />,
};

const formatButtons = ["bold", "italic", "|", "alignLeft", "alignCenter", "alignRight", "|", "top", "middle", "bottom", "|", "horizontal", "vertical", "|"];

function EditFieldDialog() {
  return (
    <div role="dialog" className="absolute left-[71px] top-[192px] flex w-[456px] flex-col overflow-hidden rounded-lg border border-[#b0b0b0] bg-[#f0f0f0] shadow-[0_10px_20px_2px_rgba(0,0,0,0.28)]">
      <div className="flex h-[23px] items-center justify-between bg-[#f3f3f3] pl-[5px] pr-2.5 text-[#8c8c8c]">
        Edit Footprint Field
        <button aria-label="Close dialog">
          <svg viewBox="0 0 8 8" className="w-2 h-2"><path d="M0 0L8 8M8 0L0 8" stroke="#888" /></svg>
        </button>
      </div>
      <div className="flex flex-col pl-[9px] pr-2.5 pt-[7px]">
        <div className="flex h-[18px] items-center">
          <label htmlFor="footprint" className="w-[50px]">Footprint:</label>
          <input id="footprint" className={clsx(fieldClass, "min-w-0 flex-1")} />
          <button aria-label="Browse footprints" className="ml-px flex w-[18px] h-[18px] items-center justify-center rounded-[3px] border border-[#d2d2d2] bg-[#fdfdfd]">
            <svg viewBox="0 0 10 10" className="w-2.5 h-2.5"><path d="M1.5 0.5V9.5M4.5 0.5V9.5M6.5 0.5L9 9.5" stroke="#444" strokeWidth="1.8" /></svg>
          </button>
        </div>
        <div className="mt-[7px] grid h-[14px] grid-cols-[113px_158px_1fr] items-center">
          <Check label="Visible" />
          <Check label="Show field name" />
          <Check label="Allow automatic placement" checked />
        </div>
        <div className="mt-[9px] flex h-[18px] items-center">
          <label htmlFor="font" className="w-[50px] shrink-0">Font:</label>
          <span className="relative mr-[7px] flex shrink-0">
            <select id="font" className="h-[18px] w-[181px] appearance-none border border-[#d2d2d2] bg-[#fdfdfd] pl-0.5">
              <option>Default Font</option>
            </select>
            <svg viewBox="0 0 8 8" className="pointer-events-none absolute right-1 top-[5px] w-2 h-2"><path d="M1 2.5L4 5.5L7 2.5" stroke="#555" fill="none" /></svg>
          </span>
          <span className="mr-px h-[18px] w-px shrink-0 bg-[#a0a0a0]" />
          {formatButtons.map((name, i) =>
            name === "|" ? (
              <span key={i} className="mx-[3px] h-[18px] w-px shrink-0 bg-[#a0a0a0]" />
            ) : (
              <button
                key={i}
                aria-label={name}
                className={clsx(
                  "flex w-[17px] h-[17px] shrink-0 items-center justify-center border",
                  ["alignCenter", "middle", "horizontal"].includes(name) ? "border-[#56a7e2] bg-[#b3d7f3]" : "border-transparent"
                )}
              >
                <svg viewBox="0 0 12 12" className="w-3 h-3 shrink-0">{formatGlyphs[name]}</svg>
              </button>
            )
          )}
        </div>
        <div className="mt-0.5 flex items-center">
          <Measure id="textSize" label="Text size:" value="50" />
          <span className="w-[41px] pl-[11px]">Color:</span>
          <button aria-label="Color" className="h-[18px] w-8 border border-[#9b9b9b] bg-[repeating-conic-gradient(#d4d4d4_0_25%,#ffffff_0_50%)] bg-size-[10px_10px]" />
        </div>
        <div className="mt-[11px] flex flex-col gap-0.5">
          <Measure id="posX" label="Position X:" value="6400" />
          <Measure id="posY" label="Position Y:" value="5550" />
        </div>
      </div>
      <div className="mt-2 flex justify-end gap-[7px] pb-[3px] pr-1.5">
        <button className="h-[18px] w-[60px] rounded-[3px] border border-[#d2d2d2] bg-[#fdfdfd]"><u>O</u>K</button>
        <button className="h-[18px] w-[60px] rounded-[3px] border border-[#d2d2d2] bg-[#fdfdfd]"><u>C</u>ancel</button>
      </div>
    </div>
  );
}

const mainTools = [
  "save", "|", "setup", "|", "page", "print", "plot", "|", "paste", "|", "undo", "redo", "|", "find", "replace", "|",
  "refresh", "zoomIn", "zoomOut", "zoomFit", "zoomObj", "zoomSel", "|", "left", "up", "right", "|",
  "rotL", "rotR", "mirV", "mirH", "|", "symEdit", "browse", "fpEdit", "|",
  "annotate", "erc", "sim", "assign", "table", "bom", "|", "pcb", "|",
];

const leftTools = [
  "grid", "gridOverride", "inch", "mil", "mm", "|", "cross", "|", "symbol", "|",
  "wire", "line90", "bus", "|", "label", "tree", "tools",
];

const rightTools = [
  "cursor", "highlight", "|", "symbol", "power", "wire", "bus", "busEntry", "noConnect", "junction", "label", "directive",
  "ruleArea", "globalLabel", "hierLabel", "sheet", "sheetPin", "importPin", "|", "text", "textBox", "drawTable",
];

const menus = ["File", "Edit", "View", "Place", "Inspect", "Tools", "Preferences", "Help"];

const info = [
  ["Reference", "J1"],
  ["Value", "Conn_01x04_Pin"],
  ["Name", "Conn_01x04_Pin"],
  ["Library", "Connector"],
  ["Footprint", "<Unknown>"],
  ["Description: Generic connector, single row, 01x04, script generated", "Keywords: connector"],
];

const status = ["", "Z 3.67", "X 6450  Y 5300", "dx 6450  dy 5300  dist 8348", "grid 50", "mils", "Place Symbols", ""];

export default function App() {
  return (
    <div className="relative flex h-screen flex-col overflow-hidden bg-[#f0f0f0] font-['Lato','Noto_Sans',sans-serif] text-[10px] leading-[13px] text-[#2b2b2b]">
      <header className="flex h-5 shrink-0 items-center bg-[#f2f2f2] pl-0.5 text-[#8c8c8c]">
        <svg viewBox="0 0 13 13" className="w-[13px] h-[13px]">
          <rect width="13" height="13" rx="2" fill="#d8cdb8" />
          <path d="M0 8H5M5 4V11M5 6L9 3V0M5 9L12 12" stroke="#333" strokeWidth="1.5" fill="none" />
          <path d="M8 3H13M10 9H13" stroke={R} strokeWidth="1.6" />
        </svg>
        <h1 className="flex-1 pl-1">*HEXAMODULAR PCB [HEXAMODULAR PCB] — Schematic Editor</h1>
        <div className="flex items-center gap-[30px] pr-[17px]">
          <button aria-label="Minimize"><svg viewBox="0 0 8 8" className="w-2 h-2"><path d="M0 4H8" stroke="#999" /></svg></button>
          <button aria-label="Restore">
            <svg viewBox="0 0 8 8" className="w-2 h-2"><path d="M0.5 2.5H5.5V7.5H0.5ZM2.5 2.5V0.5H7.5V5.5H5.5" stroke="#999" fill="none" /></svg>
          </button>
          <button aria-label="Close"><svg viewBox="0 0 8 8" className="w-2 h-2"><path d="M0 0L8 8M8 0L0 8" stroke="#999" /></svg></button>
        </div>
      </header>
      <nav className="flex h-4 shrink-0 items-center gap-[11px] bg-white pl-1.5 text-[#777]">
        {menus.map((m) => <button key={m}>{m}</button>)}
      </nav>
      <div className="h-[30px] shrink-0 pl-[3px] pt-px">
        <ToolBar items={mainTools} />
      </div>
      <main className="flex min-h-0 flex-1">
        <SidePanel />
        <div className="flex w-[33px] shrink-0 justify-end overflow-hidden border-l-2 border-[#dcdcdc] pr-px pt-0.5">
          <ToolBar vertical items={leftTools} active={["grid", "gridOverride", "mil", "tree", "tools"]} />
        </div>
        <Canvas />
        <div className="w-[30px] shrink-0 overflow-hidden border-l border-[#b4b4b4] pt-0.5">
          <ToolBar vertical items={rightTools} active={["symbol"]} />
        </div>
      </main>
      <div className="flex h-[26px] shrink-0 border-b border-[#dadada] pl-[9px] whitespace-nowrap text-[#7c7c7c]">
        {info.map(([name, value], i) => (
          <div key={i} className={["w-[69px]", "w-[94px]", "w-[94px]", "w-[70px]", "w-[79px]", "flex-1"][i]}>
            <div>{name}</div>
            <div>{value}</div>
          </div>
        ))}
      </div>
      <footer className="grid h-[19px] shrink-0 grid-cols-[385fr_64fr_134fr_212fr_154fr_50fr_142fr_125fr] items-end">
        {status.map((s, i) => (
          <span key={i} className={clsx("h-[18px] whitespace-pre pl-0.5 leading-[18px]", i > 0 && "border-l border-[#dadada]")}>{s}</span>
        ))}
      </footer>
      <EditFieldDialog />
      <FootprintChooser />
    </div>
  );
}
